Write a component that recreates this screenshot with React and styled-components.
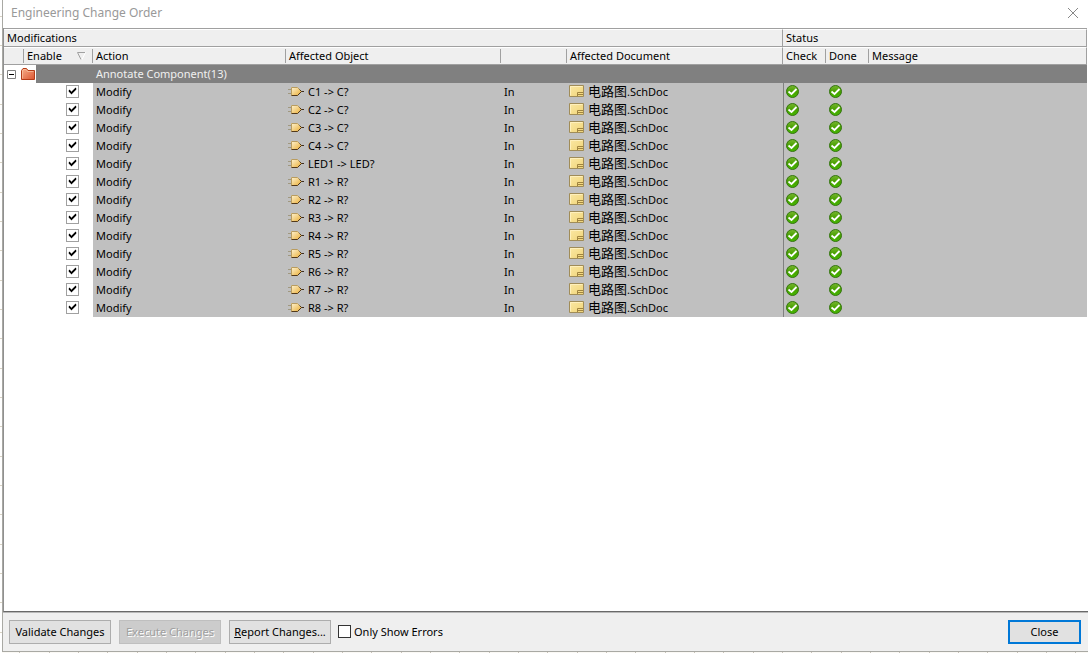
import React,{useState} from 'react'
import styled,{createGlobalStyle} from 'styled-components'


const GlobalStyle=createGlobalStyle`
*{
box-sizing:border-box;
}
body{
margin:0;
background:#fff;
font-family:'Noto Sans','Noto Sans CJK SC',sans-serif;
font-size:11px;
color:#000;
}
button,input{
font-family:inherit;
font-size:inherit;
}
`

const Sheet=styled.div`
min-height:100vh;
display:flex;
padding:0 0 1px 2px;
background:
  repeating-linear-gradient(#fff 0 16px,#d9d3c4 16px 17px,#fff 17px 45px,#d9d3c4 45px 46px,#fff 46px 74px,#d9d3c4 74px 75px,#fff 75px 88px) left top / 2px 100% no-repeat,
  repeating-linear-gradient(90deg,#fbf9f5 0 19px,#c8c2b8 19px 20px,#fbf9f5 20px 49px,#c8c2b8 49px 50px,#fbf9f5 50px 78px,#c8c2b8 78px 79px,#fbf9f5 79px 88px) left bottom / 100% 1px no-repeat;
`

const Dialog=styled.section`
flex:1;
display:flex;
flex-direction:column;
background-color:#fff;
border-left:1px solid #a9a9a4;
border-bottom:1px solid #a9a9a4;
`

const TitleBar=styled.header`
height:28px;
display:flex;
align-items:center;
justify-content:space-between;
padding:0 9px 3px 8px;
`

const Title=styled.h1`
margin:0;
font-size:12px;
font-weight:400;
color:#999;
`

const CloseIcon=styled.button`
display:flex;
padding:0;
border:none;
background:none;
color:#888;
`

const Panel=styled.main`
flex:1;
border-left:1px solid #909090;
border-bottom:1px solid #696969;
padding-right:1px;
`

const Table=styled.table`
width:100%;
table-layout:fixed;
border-collapse:separate;
border-spacing:0;
border-top:1px solid #a0a0a0;
line-height:16px;
white-space:nowrap;
`

const Band=styled.th`
height:18px;
padding:0 3px;
text-align:left;
font-weight:400;
background-color:#efefef;
border-top:1px solid #fff;
border-bottom:1px solid #a0a0a0;
border-right:1px solid #a0a0a0;
`

const Head=styled.th`
height:18px;
padding:0;
text-align:left;
font-weight:400;
background-color:#efefef;
border-top:1px solid #fff;
border-bottom:1px solid #a0a0a0;
border-right:${(props)=>props.$edge ? '1px solid #a0a0a0' : 'none'};
`

const HeadLabel=styled.div`
height:14px;
display:flex;
align-items:center;
justify-content:space-between;
padding:0 6px 0 3px;
border-right:${(props)=>props.$line ? '1px solid #a0a0a0' : 'none'};
`

const Cell=styled.td`
height:18px;
padding:0 3px;
background-color:${(props)=>props.$plain ? '#fff' : '#c0c0c0'};
border-left:${(props)=>props.$line ? '1px solid #808080' : 'none'};
`

const IconCell=styled(Cell)`
padding:0 2px;
`

const GroupCell=styled.td`
height:18px;
padding:0 3px;
background-color:#808080;
color:#f0f0f0;
`

const TreeCell=styled.td`
height:18px;
padding:0;
`

const Tree=styled.div`
height:18px;
display:flex;
align-items:center;
padding-left:3px;
background:linear-gradient(90deg,#fff 32px,#808080 32px);
`

const Toggle=styled.button`
display:flex;
padding:0;
margin-right:5px;
border:none;
background:none;
`

const Item=styled.div`
height:18px;
display:flex;
align-items:center;
gap:4px;

svg{
flex:none;
margin-bottom:2px;
}
`

const DocLabel=styled.span`
display:flex;
align-items:center;
`

const DocName=styled.span`
font-size:13px;
padding-bottom:2px;
`

const TickWrap=styled.span`
height:18px;
display:grid;
align-items:center;
justify-content:end;
padding:0 11px 2px 0;

svg{
grid-area:1/1;
pointer-events:none;
}
`

const Tick=styled.input`
grid-area:1/1;
appearance:none;
width:13px;
height:13px;
margin:0;
background-color:#fff;
border:1px solid ${(props)=>props.$dark ? '#333' : '#a0a0a0'};
`

const Footer=styled.footer`
height:39px;
display:flex;
align-items:center;
gap:8px;
padding:0 7px 0 6px;
background-color:#efefef;
border-top:1px solid #b8b8b8;
`

const Button=styled.button`
width:102px;
height:24px;
padding:0 0 2px;
white-space:nowrap;
color:#000;
background-color:#e1e1e1;
border:1px solid #adadad;

&:disabled{
color:#a0a0a0;
background-color:#ccc;
border-color:#bfbfbf;
text-shadow:1px 1px 0 #fff;
}
`

const CloseButton=styled(Button)`
width:73px;
margin-left:auto;
border:2px solid #0078d7;
`

const OnlyErrors=styled.label`
display:flex;
align-items:center;
gap:3px;
margin-left:-1px;
padding-bottom:1px;
`

const TickOverlay=styled.span`
display:grid;

svg{
grid-area:1/1;
pointer-events:none;
}
`


const TickMark=()=>(
  <svg width="13" height="13" viewBox="0 0 13 13">
    <path d="M3 5H4V6H5V7H6V6H7V5H8V4H9V3H10V5H9V6H8V7H7V8H6V9H5V8H4V7H3Z" fill="#000" stroke="#000" strokeWidth=".4"/>
  </svg>
)

const FolderIcon=()=>(
  <svg width="14" height="12" viewBox="0 0 14 12">
    <defs>
      <linearGradient id="folder" x1="0" y1="0" x2="1" y2="1">
        <stop offset="0" stopColor="#f7b08c"/>
        <stop offset="1" stopColor="#dc5430"/>
      </linearGradient>
    </defs>
    <path d="M.5 11.5V2.5L2 .5H5.5L7 2.5H13.5V11.5Z" fill="url(#folder)" stroke="#b53c18"/>
    <path d="M1.5 10.5V3L2.5 1.5H5L6.5 3.5H12.5" fill="none" stroke="#fbc4a4" strokeOpacity=".7"/>
  </svg>
)

const GateIcon=()=>(
  <svg width="16" height="11" viewBox="0 0 16 11">
    <defs>
      <linearGradient id="gate" x1="0" y1="0" x2="1" y2="1">
        <stop offset="0" stopColor="#fff6d8"/>
        <stop offset="1" stopColor="#e8a92c"/>
      </linearGradient>
    </defs>
    <path d="M0 3.5H3M0 7.5H3" stroke="#a09880"/>
    <path d="M13 5.5H16" stroke="#3c2c20"/>
    <path d="M3 1H9.5L13.5 5.5L9.5 10H3Z" fill="url(#gate)"/>
    <path d="M3.5 9.5V1.5H9.5L11.5 3.5" fill="none" stroke="#b89c60"/>
    <path d="M3.5 9.5H9.5L13.5 5.5L11.5 3.5" fill="none" stroke="#50381c"/>
  </svg>
)

const DocIcon=()=>(
  <svg width="15" height="12" viewBox="0 0 15 12">
    <defs>
      <linearGradient id="doc" x1="0" y1="0" x2="1" y2="1">
        <stop offset="0" stopColor="#fbe8a4"/>
        <stop offset="1" stopColor="#f0d478"/>
      </linearGradient>
    </defs>
    <path d="M.5 .5H14.5V11.5H.5Z" fill="url(#doc)" stroke="#a08c58"/>
    <path d="M1.5 10.5V1.5H13.5" fill="none" stroke="#fff0bc"/>
    <path d="M8.5 11V7.5H14M8.5 9.5H14" fill="none" stroke="#a08440"/>
  </svg>
)

const DoneIcon=()=>(
  <svg width="13" height="13" viewBox="0 0 13 13" role="img" aria-label="Passed">
    <defs>
      <linearGradient id="done" x1="0" y1="0" x2="0" y2="1">
        <stop offset="0" stopColor="#78b830"/>
        <stop offset=".5" stopColor="#48a000"/>
        <stop offset="1" stopColor="#44b800"/>
      </linearGradient>
    </defs>
    <circle cx="6.5" cy="6.5" r="6" fill="url(#done)" stroke="#347410"/>
    <path d="M2.5 6.5L5.5 9L10.5 4" fill="none" stroke="#fff" strokeWidth="1.8"/>
  </svg>
)

const SortIcon=()=>(
  <svg width="9" height="8" viewBox="0 0 9 8">
    <path d="M8 .5H.5L4 7.5" fill="none" stroke="#a0a0a0"/>
    <path d="M8.5 .5L5 7.5" fill="none" stroke="#fff"/>
  </svg>
)


const changes=['C1 -> C?','C2 -> C?','C3 -> C?','C4 -> C?','LED1 -> LED?','R1 -> R?','R2 -> R?','R3 -> R?','R4 -> R?','R5 -> R?','R6 -> R?','R7 -> R?','R8 -> R?']


const App = () => {

  const [enabled,setEnabled]=useState(changes.map(()=>true))
  const [open,setOpen]=useState(true)
  const [onlyErrors,setOnlyErrors]=useState(false)

  const toggleRow=(index)=>{
    setEnabled(enabled.map((value,i)=> i === index ? !value : value))
  }

  return (
    <>
    <GlobalStyle/>
    <Sheet>
      <Dialog>
        <TitleBar>
          <Title>Engineering Change Order</Title>
          <CloseIcon aria-label="Close">
            <svg width="12" height="12" viewBox="0 0 12 12"><path d="M1 1L11 11M11 1L1 11" stroke="currentColor"/></svg>
          </CloseIcon>
        </TitleBar>

        <Panel>
          <Table>
            <colgroup>
              <col width="20"/>
              <col width="69"/>
              <col width="193"/>
              <col width="215"/>
              <col width="66"/>
              <col width="216"/>
              <col width="43"/>
              <col width="43"/>
              <col/>
            </colgroup>
            <thead>
              <tr>
                <Band colSpan={6}>Modifications</Band>
                <Band colSpan={3}>Status</Band>
              </tr>
              <tr>
                <Head><HeadLabel $line/></Head>
                <Head><HeadLabel $line>Enable<SortIcon/></HeadLabel></Head>
                <Head><HeadLabel $line>Action</HeadLabel></Head>
                <Head><HeadLabel $line>Affected Object</HeadLabel></Head>
                <Head><HeadLabel $line/></Head>
                <Head $edge><HeadLabel>Affected Document</HeadLabel></Head>
                <Head><HeadLabel $line>Check</HeadLabel></Head>
                <Head><HeadLabel $line>Done</HeadLabel></Head>
                <Head $edge><HeadLabel>Message</HeadLabel></Head>
              </tr>
            </thead>
            <tbody>
              <tr>
                <TreeCell colSpan={2}>
                  <Tree>
                    <Toggle aria-label="Annotate Component" aria-expanded={open} onClick={()=>setOpen(!open)}>
                      <svg width="9" height="9" viewBox="0 0 9 9">
                        <path d="M.5 .5H8.5V8.5H.5Z" fill="#fff" stroke="#808080"/>
                        <path d={open ? 'M2 4.5H7' : 'M2 4.5H7M4.5 2V7'} stroke="#000"/>
                      </svg>
                    </Toggle>
                    <FolderIcon/>
                  </Tree>
                </TreeCell>
                <GroupCell colSpan={7}>Annotate Component(13)</GroupCell>
              </tr>

              {open && changes.map((item,index)=>(
                <tr key={item}>
                  <Cell $plain colSpan={2}>
                    <TickWrap>
                      <Tick type="checkbox" aria-label={`Enable ${item}`} checked={enabled[index]} onChange={()=>toggleRow(index)}/>
                      {enabled[index] && <TickMark/>}
                    </TickWrap>
                  </Cell>
                  <Cell>Modify</Cell>
                  <IconCell><Item><GateIcon/>{item}</Item></IconCell>
                  <Cell>In</Cell>
                  <IconCell><Item><DocIcon/><DocLabel><DocName>电路图</DocName>.SchDoc</DocLabel></Item></IconCell>
                  <IconCell $line><Item><DoneIcon/></Item></IconCell>
                  <Cell><Item><DoneIcon/></Item></Cell>
                  <Cell/>
                </tr>
              ))}
            </tbody>
          </Table>
        </Panel>

        <Footer>
          <Button>Validate Changes</Button>
          <Button disabled>Execute Changes</Button>
          <Button><u>R</u>eport Changes...</Button>
          <OnlyErrors>
            <TickOverlay>
              <Tick $dark type="checkbox" checked={onlyErrors} onChange={()=>setOnlyErrors(!onlyErrors)}/>
              {onlyErrors && <TickMark/>}
            </TickOverlay>
            Only Show Errors
          </OnlyErrors>
          <CloseButton>Close</CloseButton>
        </Footer>
      </Dialog>
    </Sheet>
    </>
  )
}

export default App
